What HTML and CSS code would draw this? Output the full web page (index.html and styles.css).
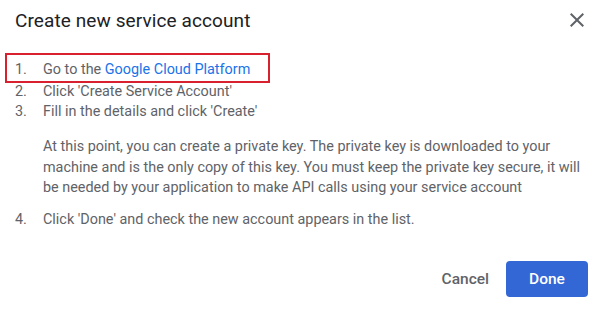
FILE: index.html
```html
<!DOCTYPE html>
<html lang="en">
<head>
    <meta charset="UTF-8">
    <title>Create new service account</title>
    <link rel="stylesheet" href="styles.css">
</head>
<body>
    <div class="dialog">
        <div class="header">
            <h1 class="title">Create new service account</h1>
            <button class="close" aria-label="Close">
                <svg width="24" height="24" viewBox="0 0 24 24"><path d="M19 6.41 17.59 5 12 10.59 6.41 5 5 6.41 10.59 12 5 17.59 6.41 19 12 13.41 17.59 19 19 17.59 13.41 12z" fill="#5f6368"/></svg>
            </button>
        </div>
        <ol class="steps">
            <li class="step highlight"><span class="num">1.</span><span>Go to the <a href="#">Google Cloud Platform</a></span></li>
            <li class="step"><span class="num">2.</span><span>Click 'Create Service Account'</span></li>
            <li class="step"><span class="num">3.</span><span>Fill in the details and click 'Create'</span></li>
        </ol>
        <p class="note">At this point, you can create a private key. The private key is downloaded to your machine and is the only copy of this key. You must keep the private key secure, it will be needed by your application to make API calls using your service account</p>
        <ol class="steps">
            <li class="step"><span class="num">4.</span><span>Click 'Done' and check the new account appears in the list.</span></li>
        </ol>
        <div class="actions">
            <button class="btn cancel">Cancel</button>
            <button class="btn done">Done</button>
        </div>
    </div>
</body>
</html>
```
FILE: styles.css
```css
body {
    margin: 0;
    background: #ffffff;
    font-family: Roboto, "Liberation Sans", sans-serif;
}

.dialog {
    padding: 8px 14px 15px 15px;
}

.header {
    display: flex;
    justify-content: space-between;
    align-items: center;
    height: 24px;
}

.title {
    margin: 0;
    font-size: 19px;
    font-weight: 400;
    color: #202124;
    letter-spacing: 0.1px;
}

.close {
    border: 0;
    background: none;
    padding: 0;
    width: 24px;
    height: 24px;
    margin-right: -1px;
}

.steps {
    list-style: none;
    margin: 0;
    padding: 0;
}

.steps:first-of-type {
    margin-top: 21px;
}

.step {
    display: flex;
    font-size: 14.4px;
    line-height: 20px;
    color: #5f6368;
}

.num {
    width: 28px;
    flex: none;
}

.highlight {
    border: 2px solid #d9202e;
    margin: 0 0 -1px -10px;
    padding: 5px 0 1px 8px;
    width: 253px;
}

.step a {
    color: #1a73e8;
    text-decoration: none;
}

.note {
    margin: 15px 0 11px 28px;
    font-size: 14.4px;
    line-height: 20.5px;
    color: #5f6368;
}

.actions {
    display: flex;
    justify-content: flex-end;
    align-items: center;
    gap: 17px;
    margin-top: 31px;
}

.btn {
    font-family: Roboto, "Liberation Sans", sans-serif;
    font-size: 15.5px;
    font-weight: 500;
    border: 0;
    border-radius: 4px;
    height: 36px;
    padding: 0;
    background: none;
}

.cancel {
    color: #5f6368;
}

.done {
    background: #3367d6;
    color: #ffffff;
    width: 82px;
}
```
